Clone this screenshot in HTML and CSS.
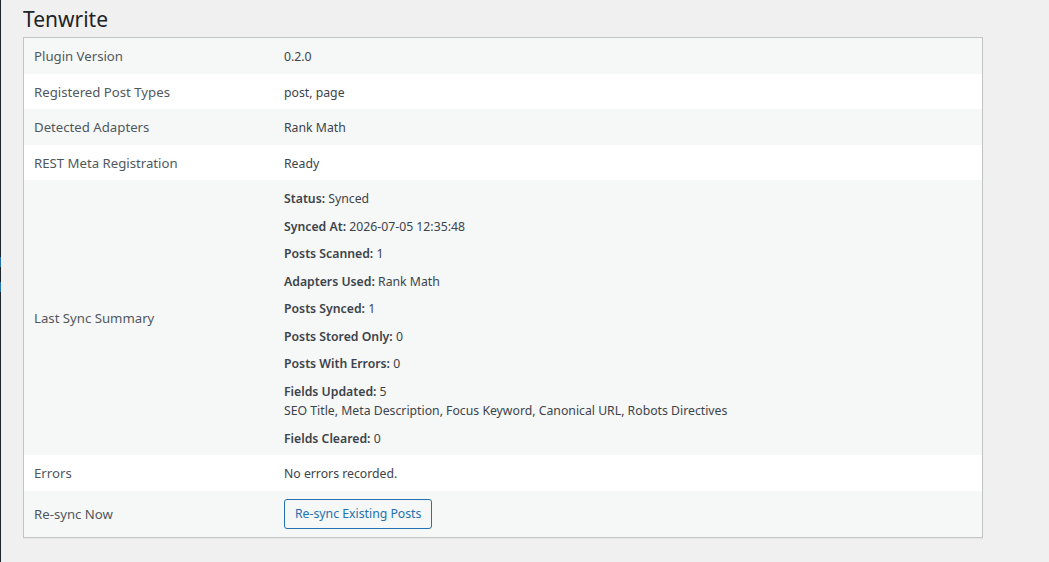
FILE: index.html
```html
<!DOCTYPE html>
<html lang="en">
<head>
<meta charset="utf-8">
<title>Tenwrite</title>
<link rel="stylesheet" href="styles.css">
</head>
<body>
<div class="layout">
  <div class="menu-edge">
    <span class="edge-mark mark-one"></span>
    <span class="edge-mark mark-two"></span>
  </div>
  <div class="wrap">
    <h1 class="page-title">Tenwrite</h1>
    <table class="status-table">
      <tbody>
        <tr class="alt">
          <th class="label">Plugin Version</th>
          <td class="value">0.2.0</td>
        </tr>
        <tr>
          <th class="label">Registered Post Types</th>
          <td class="value">post, page</td>
        </tr>
        <tr class="alt">
          <th class="label">Detected Adapters</th>
          <td class="value">Rank Math</td>
        </tr>
        <tr>
          <th class="label">REST Meta Registration</th>
          <td class="value">Ready</td>
        </tr>
        <tr class="alt">
          <th class="label">Last Sync Summary</th>
          <td class="value">
            <p class="summary-line"><strong>Status:</strong> Synced</p>
            <p class="summary-line"><strong>Synced At:</strong> 2026-07-05 12:35:48</p>
            <p class="summary-line"><strong>Posts Scanned:</strong> 1</p>
            <p class="summary-line"><strong>Adapters Used:</strong> Rank Math</p>
            <p class="summary-line"><strong>Posts Synced:</strong> 1</p>
            <p class="summary-line"><strong>Posts Stored Only:</strong> 0</p>
            <p class="summary-line"><strong>Posts With Errors:</strong> 0</p>
            <p class="summary-line"><strong>Fields Updated:</strong> 5<br>SEO Title, Meta Description, Focus Keyword, Canonical URL, Robots Directives</p>
            <p class="summary-line"><strong>Fields Cleared:</strong> 0</p>
          </td>
        </tr>
        <tr>
          <th class="label">Errors</th>
          <td class="value">No errors recorded.</td>
        </tr>
        <tr class="alt">
          <th class="label">Re-sync Now</th>
          <td class="value"><button type="button" class="button-secondary">Re-sync Existing Posts</button></td>
        </tr>
      </tbody>
    </table>
  </div>
</div>
</body>
</html>
```
FILE: styles.css
```css
html, body {
  margin: 0;
  padding: 0;
  background: #f0f0f1;
}

body {
  font-family: "Noto Sans", "Open Sans", "Liberation Sans", sans-serif;
  font-size: 12.25px;
  line-height: 19.5px;
  color: #3c434a;
  min-height: 562px;
}

.layout {
  display: flex;
  min-height: 562px;
}

.menu-edge {
  width: 1px;
  background: #1d2327;
  flex: none;
  display: flex;
  flex-direction: column;
  padding-top: 257px;
  gap: 15px;
}

.edge-mark {
  display: block;
  width: 1px;
  height: 10px;
  background: #2271b1;
}

.wrap {
  padding-left: 22px;
}

.page-title {
  margin: 0;
  padding: 4px 0 0;
  font-size: 21px;
  font-weight: 400;
  line-height: 30px;
  color: #1d2327;
}

.status-table {
  margin-top: 3px;
  width: 960px;
  border: 1px solid #c3c4c7;
  border-collapse: collapse;
  border-spacing: 0;
  box-shadow: 0 1px 1px rgba(0, 0, 0, 0.04);
  background: #fff;
}

.status-table tr {
  background: #fff;
}

.status-table tr.alt {
  background: #f6f7f7;
}

.label,
.value {
  padding: 9px 10px 7px;
  text-align: left;
  vertical-align: middle;
  font-weight: 400;
  line-height: 19.5px;
}

.label {
  width: 230px;
  font-size: 13.2px;
  color: #50575e;
}

.value {
  font-size: 12.25px;
  color: #3c434a;
}

.summary-line {
  margin: 0 0 8px;
}

.summary-line:last-child {
  margin-bottom: 0;
}

.summary-line strong {
  font-weight: 600;
}

.button-secondary {
  font-family: inherit;
  font-size: 12.25px;
  line-height: 28px;
  min-height: 30px;
  margin: -1px 0 1px;
  padding: 0 10px;
  color: #2271b1;
  border: 1px solid #2271b1;
  border-radius: 3px;
  background: #f6f7f7;
  cursor: pointer;
  vertical-align: top;
}
```
